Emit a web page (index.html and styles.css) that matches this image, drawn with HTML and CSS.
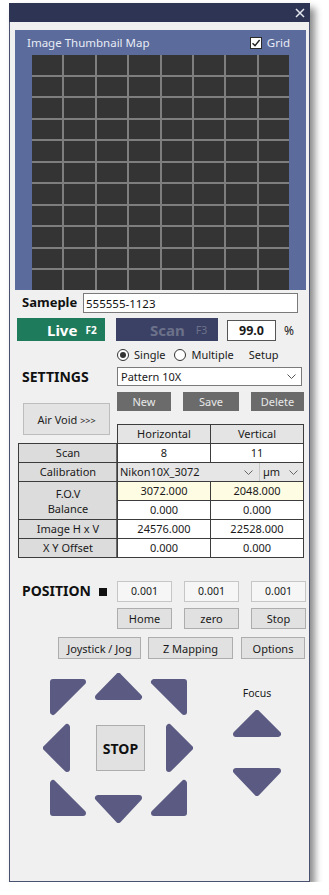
FILE: index.html
```html
<!DOCTYPE html>
<html>
  <head>
    <meta charset="utf-8">
    <meta name="viewport" content="width=device-width, initial-scale=1">
    <title>Scan Control</title>
    <link rel="stylesheet" href="styles.css">
  </head>
  <body>
    <div class="window">
      <div class="titlebar">
        <svg class="close_icon" width="10" height="10" viewBox="0 0 10 10"><path d="M1 1L9 9M9 1L1 9" stroke="#E4E6EE" stroke-width="1.5"/></svg>
      </div>

      <!-- thumbnail map -->
      <div class="map_panel">
        <div class="map_head">
          <span>Image Thumbnail Map</span>
          <span class="map_check">
            <span class="check_box"><svg width="10" height="10" viewBox="0 0 10 10"><path d="M1.5 5.2L4 7.6L8.6 2" fill="none" stroke="#222" stroke-width="1.4"/></svg></span>Grid
          </span>
        </div>
        <div class="map_grid">
          <span></span><span></span><span></span><span></span><span></span><span></span><span></span><span></span>
          <span></span><span></span><span></span><span></span><span></span><span></span><span></span><span></span>
          <span></span><span></span><span></span><span></span><span></span><span></span><span></span><span></span>
          <span></span><span></span><span></span><span></span><span></span><span></span><span></span><span></span>
          <span></span><span></span><span></span><span></span><span></span><span></span><span></span><span></span>
          <span></span><span></span><span></span><span></span><span></span><span></span><span></span><span></span>
          <span></span><span></span><span></span><span></span><span></span><span></span><span></span><span></span>
          <span></span><span></span><span></span><span></span><span></span><span></span><span></span><span></span>
          <span></span><span></span><span></span><span></span><span></span><span></span><span></span><span></span>
          <span></span><span></span><span></span><span></span><span></span><span></span><span></span><span></span>
          <span></span><span></span><span></span><span></span><span></span><span></span><span></span><span></span>
        </div>
      </div>

      <div class="sample_row">
        <span class="sample_label">Sameple</span>
        <input type="text" class="sample_input" value="555555-1123" />
      </div>

      <div class="run_row">
        <button class="btn_live">Live<small>F2</small></button>
        <button class="btn_scan">Scan<small>F3</small></button>
        <div class="ratio_box">99.0</div>
        <span class="ratio_unit">%</span>
      </div>

      <!-- settings -->
      <div class="settings">
        <div class="settings_side">
          <div class="settings_title">SETTINGS</div>
          <button class="btn_airvoid">Air Void <small>&gt;&gt;&gt;</small></button>
        </div>
        <div class="settings_main">
          <div class="radio_row">
            <span class="radio radio-on"></span><span class="radio_txt">Single</span>
            <span class="radio radio-multi"></span><span class="radio_txt">Multiple</span>
            <span class="radio_setup">Setup</span>
          </div>
          <div class="combo combo-pattern">
            <span>Pattern 10X</span>
            <svg width="9" height="5" viewBox="0 0 9 5"><path d="M0.5 0.5L4.5 4.5L8.5 0.5" fill="none" stroke="#555" stroke-width="1"/></svg>
          </div>
          <div class="btn_row">
            <button class="btn_dark btn-new">New</button>
            <button class="btn_dark btn-save">Save</button>
            <button class="btn_dark btn-delete">Delete</button>
          </div>
          <div class="table_head">
            <div>Horizontal</div>
            <div>Vertical</div>
          </div>
        </div>
      </div>

      <div class="param_table">
        <div class="cell_label">Scan</div>
        <div class="cell_val">8</div>
        <div class="cell_val">11</div>

        <div class="cell_label">Calibration</div>
        <div class="cell_calib">
          <div class="combo_cell combo-lens">
            <span>Nikon10X_3072</span>
            <svg width="9" height="5" viewBox="0 0 9 5"><path d="M0.5 0.5L4.5 4.5L8.5 0.5" fill="none" stroke="#666" stroke-width="1"/></svg>
          </div>
          <div class="combo_cell combo-unit">
            <span>µm</span>
            <svg width="9" height="5" viewBox="0 0 9 5"><path d="M0.5 0.5L4.5 4.5L8.5 0.5" fill="none" stroke="#666" stroke-width="1"/></svg>
          </div>
        </div>

        <div class="cell_label cell-tall"><span>F.O.V</span><span>Balance</span></div>
        <div class="cell_val cell-fov">3072.000</div>
        <div class="cell_val cell-fov">2048.000</div>
        <div class="cell_val">0.000</div>
        <div class="cell_val">0.000</div>

        <div class="cell_label">Image H x V</div>
        <div class="cell_val">24576.000</div>
        <div class="cell_val">22528.000</div>

        <div class="cell_label">X Y Offset</div>
        <div class="cell_val">0.000</div>
        <div class="cell_val">0.000</div>
      </div>

      <!-- position -->
      <div class="position">
        <div class="position_title">POSITION<span class="position_mark"></span></div>
        <div class="pos_val">0.001</div>
        <div class="pos_val">0.001</div>
        <div class="pos_val">0.001</div>
        <div></div>
        <button class="btn_light">Home</button>
        <button class="btn_light">zero</button>
        <button class="btn_light">Stop</button>
      </div>

      <div class="action_row">
        <button class="btn_light btn-jog">Joystick / Jog</button>
        <button class="btn_light btn-zmap">Z Mapping</button>
        <button class="btn_light btn-options">Options</button>
      </div>

      <!-- jog pad -->
      <div class="jog">
        <div class="jog_pad">
          <svg width="47" height="46" viewBox="0 0 47 46"><path class="arrow" d="M10 9L40 9L10 39Z"/></svg>
          <svg width="57" height="46" viewBox="0 0 57 46"><path class="arrow" d="M28.5 3L49 24L8 24Z"/></svg>
          <svg width="46" height="46" viewBox="0 0 46 46"><path class="arrow" d="M7 9L37 9L37 39Z"/></svg>

          <svg width="47" height="58" viewBox="0 0 47 58"><path class="arrow" d="M3 29L24 8L24 50Z"/></svg>
          <div class="jog_center"><button class="btn_stop">STOP</button></div>
          <svg width="46" height="58" viewBox="0 0 46 58"><path class="arrow" d="M43 29L22 8L22 50Z"/></svg>

          <svg width="47" height="46" viewBox="0 0 47 46"><path class="arrow" d="M10 6L10 36L40 36Z"/></svg>
          <svg width="57" height="46" viewBox="0 0 57 46"><path class="arrow" d="M8 21L49 21L28.5 43Z"/></svg>
          <svg width="46" height="46" viewBox="0 0 46 46"><path class="arrow" d="M37 6L37 36L7 36Z"/></svg>
        </div>

        <div class="focus">
          <div class="focus_label">Focus</div>
          <svg class="focus_up" width="48" height="27" viewBox="0 0 48 27"><path class="arrow" d="M24 3L45 24L3 24Z"/></svg>
          <svg class="focus_down" width="48" height="28" viewBox="0 0 48 28"><path class="arrow" d="M3 3L45 3L24 25Z"/></svg>
        </div>
      </div>
    </div>
  </body>
</html>
```

FILE: styles.css
```css
html, body{
  margin: 0;
  padding: 0;
  background-color: #FFFFFF;
  font-family: "Noto Sans", "Noto Sans CJK KR", sans-serif;
  font-size: 11px;
  line-height: 1.2;
  color: #1A1A1A;
}
button, input{
  font-family: inherit;
  font-size: 11px;
  color: inherit;
  padding: 0;
  margin: 0;
  box-sizing: border-box;
}
.window{
  box-sizing: border-box;
  width: 301px;
  height: 879px;
  margin: 3px 0 0 9px;
  background: #F0F0F0;
  border: 1px solid #4A5170;
  border-top: none;
  box-shadow: 5px 5px 7px rgba(0, 0, 0, .45);
}
.titlebar{
  height: 19px;
  margin: 0 -1px;
  background: #2E3454;
  display: flex;
  justify-content: flex-end;
  align-items: center;
  padding-right: 5px;
}

/* thumbnail map */
.map_panel{
  height: 260px;
  margin: 8px 3px 0 5px;
  background: #5B6B9B;
  overflow: hidden;
}
.map_head{
  height: 25px;
  display: flex;
  justify-content: space-between;
  align-items: center;
  padding: 1px 16px 0 12px;
  box-sizing: border-box;
  color: #E8ECF6;
  font-size: 11.5px;
  line-height: 14px;
}
.map_check{
  display: flex;
  align-items: center;
}
.check_box{
  box-sizing: border-box;
  width: 12px;
  height: 12px;
  margin-right: 5px;
  background: #FFFFFF;
  border: 1px solid #2A2A2A;
  display: flex;
  align-items: center;
  justify-content: center;
}
.map_grid{
  width: 257px;
  height: 235px;
  margin-left: 17px;
  display: grid;
  grid-template-columns: repeat(8, 1fr);
  grid-template-rows: repeat(11, 1fr);
  gap: 2px;
  background: #7E7E7E;
}
.map_grid span{
  background: #343434;
}

/* sample + run */
.sample_row{
  height: 20px;
  margin-top: 3px;
  padding-left: 12px;
  display: flex;
  align-items: center;
}
.sample_label{
  width: 61px;
  font-size: 13px;
  font-weight: bold;
  color: #111111;
}
.sample_input{
  width: 215px;
  height: 20px;
  border: 1px solid #7A7A7A;
  background: #FFFFFF;
  padding: 0 2px;
  font-size: 11.5px;
  color: #111111;
}
.run_row{
  height: 23px;
  margin-top: 5px;
  padding-left: 7px;
  display: flex;
  align-items: flex-end;
}
.btn_live, .btn_scan{
  height: 23px;
  border: none;
  font-size: 15px;
  font-weight: bold;
  text-align: left;
  display: flex;
  align-items: center;
}
.btn_live{
  width: 88px;
  padding-left: 30px;
  background: #1E7B5B;
  color: #FFFFFF;
}
.btn_live small{
  font-size: 10px;
  margin-left: 8px;
}
.btn_scan{
  width: 102px;
  margin-left: 11px;
  padding-left: 34px;
  background: #3B4165;
  color: #6C718A;
}
.btn_scan small{
  font-size: 10.5px;
  font-weight: normal;
  margin-left: 11px;
}
.ratio_box{
  box-sizing: border-box;
  width: 49px;
  height: 21px;
  margin-left: 9px;
  border: 1px solid #555555;
  background: #FFFFFF;
  font-size: 12.5px;
  font-weight: bold;
  line-height: 19px;
  text-align: center;
}
.ratio_unit{
  margin-left: 8px;
  font-size: 12px;
  line-height: 21px;
}

/* settings */
.settings{
  display: flex;
  margin-top: 7px;
  padding-left: 8px;
}
.settings_side{
  width: 99px;
}
.settings_title{
  margin-top: 19px;
  height: 19px;
  line-height: 19px;
  padding-left: 4px;
  font-size: 14px;
  font-weight: bold;
  color: #111111;
}
.btn_airvoid{
  width: 87px;
  height: 32px;
  margin: 17px 0 0 5px;
  background: #E3E3E3;
  border: 1px solid #BDBDBD;
  color: #222222;
}
.btn_airvoid small{
  font-size: 9px;
}
.settings_main{
  width: 187px;
}
.radio_row{
  height: 14px;
  display: flex;
  align-items: center;
}
.radio{
  flex: none;
  box-sizing: border-box;
  width: 12px;
  height: 12px;
  border: 1px solid #333333;
  border-radius: 50%;
  background: #FFFFFF;
  display: flex;
  align-items: center;
  justify-content: center;
}
.radio-on::after{
  content: '';
  width: 6px;
  height: 6px;
  border-radius: 50%;
  background: #333333;
}
.radio-multi{
  margin-left: 9px;
}
.radio_txt{
  margin-left: 5px;
}
.radio_setup{
  margin-left: 15px;
}
.combo{
  box-sizing: border-box;
  height: 19px;
  margin-top: 5px;
  border: 1px solid #7A7A7A;
  background: #FFFFFF;
  display: flex;
  justify-content: space-between;
  align-items: center;
  padding: 0 5px 0 3px;
}
.combo-pattern{
  width: 185px;
}
.btn_row{
  margin-top: 6px;
  display: flex;
  justify-content: space-between;
}
.btn_dark{
  height: 19px;
  border: none;
  background: #6B6B6B;
  color: #E8E8E8;
}
.btn-new{
  width: 54px;
}
.btn-save{
  width: 56px;
}
.btn-delete{
  width: 53px;
}
.table_head{
  margin-top: 13px;
  height: 19px;
  box-sizing: border-box;
  display: grid;
  grid-template-columns: 92px 92px;
  gap: 1px;
  border: 1px solid #3C3C3C;
  border-bottom: none;
  background: #3C3C3C;
}
.table_head div{
  background: #E4E4E4;
  text-align: center;
  line-height: 18px;
}

/* parameter table */
.param_table{
  width: 286px;
  box-sizing: border-box;
  margin-left: 8px;
  display: grid;
  grid-template-columns: 98px 92px 92px;
  grid-auto-rows: 18px;
  gap: 1px;
  border: 1px solid #3C3C3C;
  background: #3C3C3C;
}
.cell_label{
  background: #DCDCDC;
  text-align: center;
  line-height: 18px;
  box-shadow: inset -1px 0 0 #6A6A6A;
}
.cell-tall{
  grid-row: span 2;
  line-height: 15px;
  display: flex;
  flex-direction: column;
  justify-content: center;
}
.cell_val{
  background: #FFFFFF;
  text-align: center;
  line-height: 18px;
}
.cell-fov{
  background: #FFFCE4;
}
.cell_calib{
  grid-column: span 2;
  display: flex;
  background: #E6E6E6;
}
.combo_cell{
  display: flex;
  justify-content: space-between;
  align-items: center;
  box-sizing: border-box;
}
.combo-lens{
  width: 142px;
  padding: 0 6px 0 2px;
  border-right: 1px solid #C8C8C8;
}
.combo-unit{
  flex: 1;
  padding: 0 5px 0 3px;
}

/* position */
.position{
  margin-top: 23px;
  padding-left: 8px;
  display: grid;
  grid-template-columns: 87px 55px 55px 55px;
  grid-auto-rows: 21px;
  column-gap: 12px;
  row-gap: 6px;
}
.position_title{
  display: flex;
  align-items: center;
  padding-left: 4px;
  font-size: 14px;
  font-weight: bold;
  color: #111111;
}
.position_mark{
  flex: none;
  width: 8px;
  height: 8px;
  margin-left: 8px;
  background: #111111;
}
.pos_val{
  box-sizing: border-box;
  border: 1px solid #C6C6C6;
  background: #F6F6F6;
  font-size: 10.5px;
  line-height: 19px;
  text-align: center;
}
.btn_light{
  background: #E1E1E1;
  border: 1px solid #ADADAD;
  color: #1A1A1A;
}
.action_row{
  margin-top: 8px;
  padding-right: 4px;
  display: flex;
  justify-content: flex-end;
}
.action_row .btn_light{
  height: 22px;
}
.btn-jog{
  width: 83px;
}
.btn-zmap{
  width: 85px;
  margin-left: 7px;
}
.btn-options{
  width: 64px;
  margin-left: 8px;
}

/* jog pad */
.jog{
  margin-top: 14px;
  padding-left: 33px;
  display: flex;
}
.jog_pad{
  display: grid;
  grid-template-columns: 47px 57px 46px;
  grid-template-rows: 46px 58px 46px;
}
.jog_pad svg{
  display: block;
}
.arrow{
  fill: #5A5A83;
  stroke: #5A5A83;
  stroke-width: 6;
  stroke-linejoin: round;
}
.jog_center{
  padding: 6px 0 0 6px;
}
.btn_stop{
  width: 49px;
  height: 46px;
  background: #E1E1E1;
  border: 1px solid #ADADAD;
  font-size: 14px;
  font-weight: bold;
  color: #111111;
}
.focus{
  margin-left: 40px;
  width: 48px;
  display: flex;
  flex-direction: column;
}
.focus_label{
  margin-top: 13px;
  line-height: 14px;
  font-size: 10.5px;
  text-align: center;
}
.focus_up{
  display: block;
  margin-top: 10px;
}
.focus_down{
  display: block;
  margin-top: 31px;
}
```
